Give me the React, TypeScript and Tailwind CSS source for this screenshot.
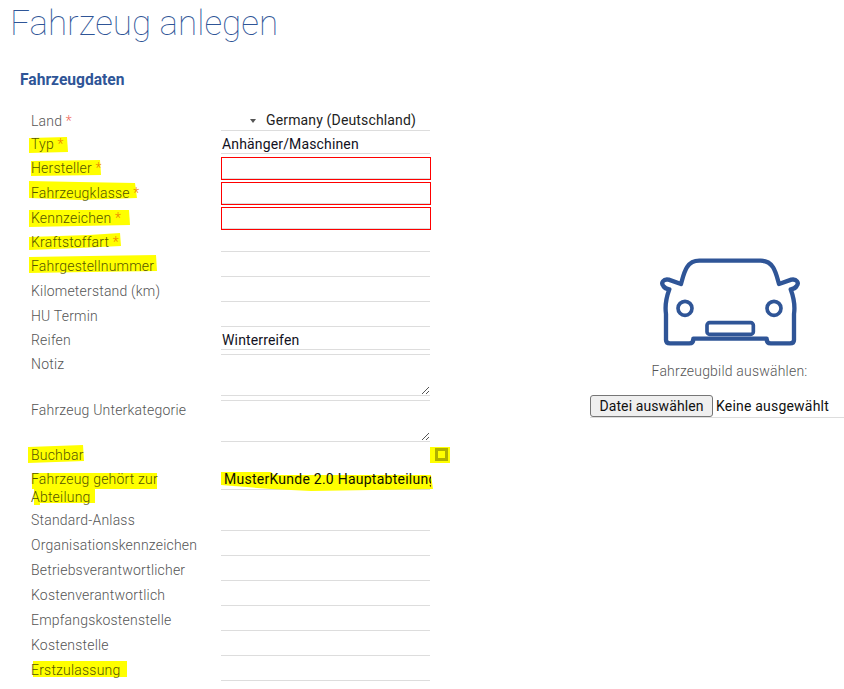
const font = { fontFamily: "Roboto, sans-serif" };

type Hl = { w: number; h: number; x: number; y: number; pts: string };

function Marker({ hl }: { hl: Hl }) {
  return (
    <svg
      className="absolute"
      width={hl.w}
      height={hl.h}
      style={{ left: hl.x, top: hl.y }}
      viewBox={`0 0 ${hl.w} ${hl.h}`}
    >
      <polygon points={hl.pts} fill="#ffff00" />
    </svg>
  );
}

type RowDef = {
  label: string;
  star?: boolean;
  h: number;
  pt: number;
  kind: "line" | "text" | "red" | "area" | "select";
  value?: string;
  hl?: Hl;
};

const rows: RowDef[] = [
  { label: "Land", star: true, h: 21, pt: 3, kind: "select" },
  { label: "Typ", star: true, h: 23, pt: 5, kind: "text", value: "Anhänger/Maschinen",
    hl: { w: 39, h: 16, x: -2, y: 1, pts: "0,1 38,0 39,15 0,16" } },
  { label: "Hersteller", star: true, h: 25, pt: 6, kind: "red",
    hl: { w: 70, h: 16, x: 0, y: 0, pts: "0,1 69,0 70,15 0,16" } },
  { label: "Fahrzeugklasse", star: true, h: 25, pt: 6, kind: "red",
    hl: { w: 108, h: 19, x: -2, y: -4, pts: "0,0 50,1 106,2 108,17 50,19 0,17" } },
  { label: "Kennzeichen", star: true, h: 25, pt: 6, kind: "red",
    hl: { w: 101, h: 18, x: -2, y: -1, pts: "0,1 100,1 101,16 0,18" } },
  { label: "Kraftstoffart", star: true, h: 23, pt: 5, kind: "line",
    hl: { w: 92, h: 17, x: -2, y: -1, pts: "0,4 30,3 60,2 91,0 92,13 50,15 0,17" } },
  { label: "Fahrgestellnummer", h: 25, pt: 6, kind: "line",
    hl: { w: 128, h: 18, x: -2, y: -3, pts: "0,2 60,1 127,0 128,16 60,17 0,18" } },
  { label: "Kilometerstand (km)", h: 25, pt: 6, kind: "line" },
  { label: "HU Termin", h: 25, pt: 6, kind: "line" },
  { label: "Reifen", h: 23, pt: 5, kind: "text", value: "Winterreifen" },
  { label: "Notiz", h: 46, pt: 6, kind: "area" },
  { label: "Fahrzeug Unterkategorie", h: 46, pt: 6, kind: "area" },
];

const rows2: RowDef[] = [
  { label: "Standard-Anlass", h: 25, pt: 6, kind: "line" },
  { label: "Organisationskennzeichen", h: 25, pt: 6, kind: "line" },
  { label: "Betriebsverantwortlicher", h: 25, pt: 6, kind: "line" },
  { label: "Kostenverantwortlich", h: 25, pt: 6, kind: "line" },
  { label: "Empfangskostenstelle", h: 25, pt: 6, kind: "line" },
  { label: "Kostenstelle", h: 25, pt: 6, kind: "line" },
  { label: "Erstzulassung", h: 25, pt: 6, kind: "line",
    hl: { w: 94, h: 16, x: 2, y: -1, pts: "0,0 94,0 94,16 0,16" } },
];

function Field({ r }: { r: RowDef }) {
  if (r.kind === "select")
    return (
      <div className="flex h-full w-[209px] items-center border-b border-[#dddddd] pl-[29px] pt-[1px] text-[14px] text-[#222222]">
        <span className="mr-[10px] h-0 w-0 border-x-[3px] border-t-[4px] border-x-transparent border-t-[#555555]" />
        <span className="tracking-[0.15px]">Germany (Deutschland)</span>
      </div>
    );
  if (r.kind === "text")
    return (
      <div className="flex h-full w-[209px] items-center border-b border-[#dddddd] pl-[1px] pt-[4px] text-[14px] tracking-[0.15px] text-[#111122]">
        {r.value}
      </div>
    );
  if (r.kind === "red")
    return <div className="mt-[3px] h-[23px] w-[210px] border border-[#ff0000] shadow-[inset_0_-1px_0_#dddddd]" />;
  if (r.kind === "area")
    return (
      <div className="relative mt-[4px] h-[42px] w-[209px] border-y border-[#dddddd]">
        <svg className="absolute bottom-0 right-0" width="9" height="9" viewBox="0 0 9 9">
          <path d="M1 8 L8 1 M5 8 L8 5" stroke="#555555" strokeWidth="1" fill="none" />
        </svg>
      </div>
    );
  return <div className="h-full w-[209px] border-b border-[#dddddd]" />;
}

function Row({ r }: { r: RowDef }) {
  return (
    <div className="flex" style={{ height: r.h }}>
      <div className="w-[221px] shrink-0 pl-[31px] text-[14px] font-light leading-[16px] tracking-[0.2px] text-[#555555]">
        <div className="relative" style={{ top: r.pt }}>
          {r.hl && <Marker hl={r.hl} />}
          <span className={r.hl ? "relative text-[#555500]" : "relative"}>
            {r.label}
            {r.star && <span className={r.hl ? "text-[#f08000]" : "text-[#f06a5a]"}> *</span>}
          </span>
        </div>
      </div>
      <Field r={r} />
    </div>
  );
}

function Car() {
  return (
    <svg width="144" height="88" viewBox="234 54 432 264" fill="none" stroke="#2f5597" strokeWidth="13" strokeLinejoin="round" strokeLinecap="round">
      <path d="M303 132 C312 100 318 62 358 62 L542 62 C582 62 588 100 597 132 L634 119 C650 116 658 128 650 138 C645 146 640 147 632 148 C642 175 646 195 642 222 L642 300 Q642 310 630 310 L572 310 Q560 310 560 296 L340 296 Q340 310 328 310 L270 310 Q258 310 258 300 L258 222 C254 195 258 175 268 148 C260 147 255 146 250 138 C242 128 250 116 266 119 Z" />
      <circle cx="315" cy="205" r="21" strokeWidth="11" />
      <circle cx="582" cy="205" r="21" strokeWidth="11" />
      <rect x="381" y="248" width="139" height="35" rx="8" strokeWidth="11" />
    </svg>
  );
}

export default function App() {
  return (
    <div className="relative h-[689px] w-[844px] overflow-hidden bg-white" style={font}>
      <h1 className="pl-[10px] pt-[2px] text-[35px] font-thin leading-[44px] text-[#2f5597]">Fahrzeug anlegen</h1>
      <h2 className="mt-[24px] pl-[20px] text-[15.6px] font-bold leading-[20px] text-[#2f5597]">Fahrzeugdaten</h2>
      <div className="flex">
        <div className="mt-[20px] w-[590px] shrink-0">
          {rows.map((r) => (
            <Row key={r.label} r={r} />
          ))}
          <div className="flex h-[25px]">
            <div className="w-[221px] shrink-0 pl-[31px] text-[14px] font-light leading-[16px] tracking-[0.2px] text-[#555500]">
              <div className="relative top-[5px]">
                <Marker hl={{ w: 56, h: 18, x: -3, y: -2, pts: "0,2 55,0 56,16 0,18" }} />
                <span className="relative">Buchbar</span>
              </div>
            </div>
            <div className="ml-[209px] mt-[5px] flex h-[16px] w-[20px] shrink-0 justify-center bg-[#ffff00] pl-[2px]">
              <span className="mt-[1px] block h-[13px] w-[13px] border-[3px] border-[#b0b000]" />
            </div>
          </div>
          <div className="flex h-[39px]">
            <div className="relative w-[221px] shrink-0 pl-[31px] text-[14px] font-light leading-[18px] tracking-[0.2px] text-[#555500]">
              <Marker hl={{ w: 125, h: 16, x: 32, y: 6, pts: "0,0 125,0 125,16 0,16" }} />
              <Marker hl={{ w: 61, h: 16, x: 34, y: 22, pts: "0,0 61,0 61,14 6,14 6,16 0,16" }} />
              <span className="relative top-[3px] block w-[135px]">Fahrzeug gehört zur Abteilung</span>
            </div>
            <div className="relative h-[23px] w-[209px] border-b border-[#dddddd] pl-[3px] pt-[4px] text-[14px] leading-[16px] tracking-[0.25px] text-[#111100]">
              <Marker hl={{ w: 212, h: 19, x: 0, y: 5, pts: "0,0 50,0 53,3 90,3 90,3 210,3 212,17 90,19 50,17 0,13" }} />
              <span className="relative block w-[207px] overflow-hidden whitespace-nowrap">MusterKunde 2.0 Hauptabteilung</span>
            </div>
          </div>
          {rows2.map((r) => (
            <Row key={r.label} r={r} />
          ))}
        </div>
        <div className="flex w-[254px] shrink-0 flex-col items-center">
          <div className="ml-[25px] mt-[168px] h-[88px]">
            <Car />
          </div>
          <div className="ml-[25px] mt-[16px] whitespace-nowrap text-[14px] font-light leading-[18px] tracking-[0.2px] text-[#555555]">Fahrzeugbild auswählen:</div>
          <div className="mt-[15px] flex h-[23px] w-full items-start border-b border-[#dddddd] text-[14px] text-[#111111]">
            <button className="h-[22px] w-[123px] rounded-[3px] border border-[#767676] bg-[#efefef] text-[14px] leading-[18px] tracking-[0.1px]">Datei auswählen</button>
            <span className="ml-[3px] leading-[22px] tracking-[0.2px]">Keine ausgewählt</span>
          </div>
        </div>
      </div>
    </div>
  );
}
